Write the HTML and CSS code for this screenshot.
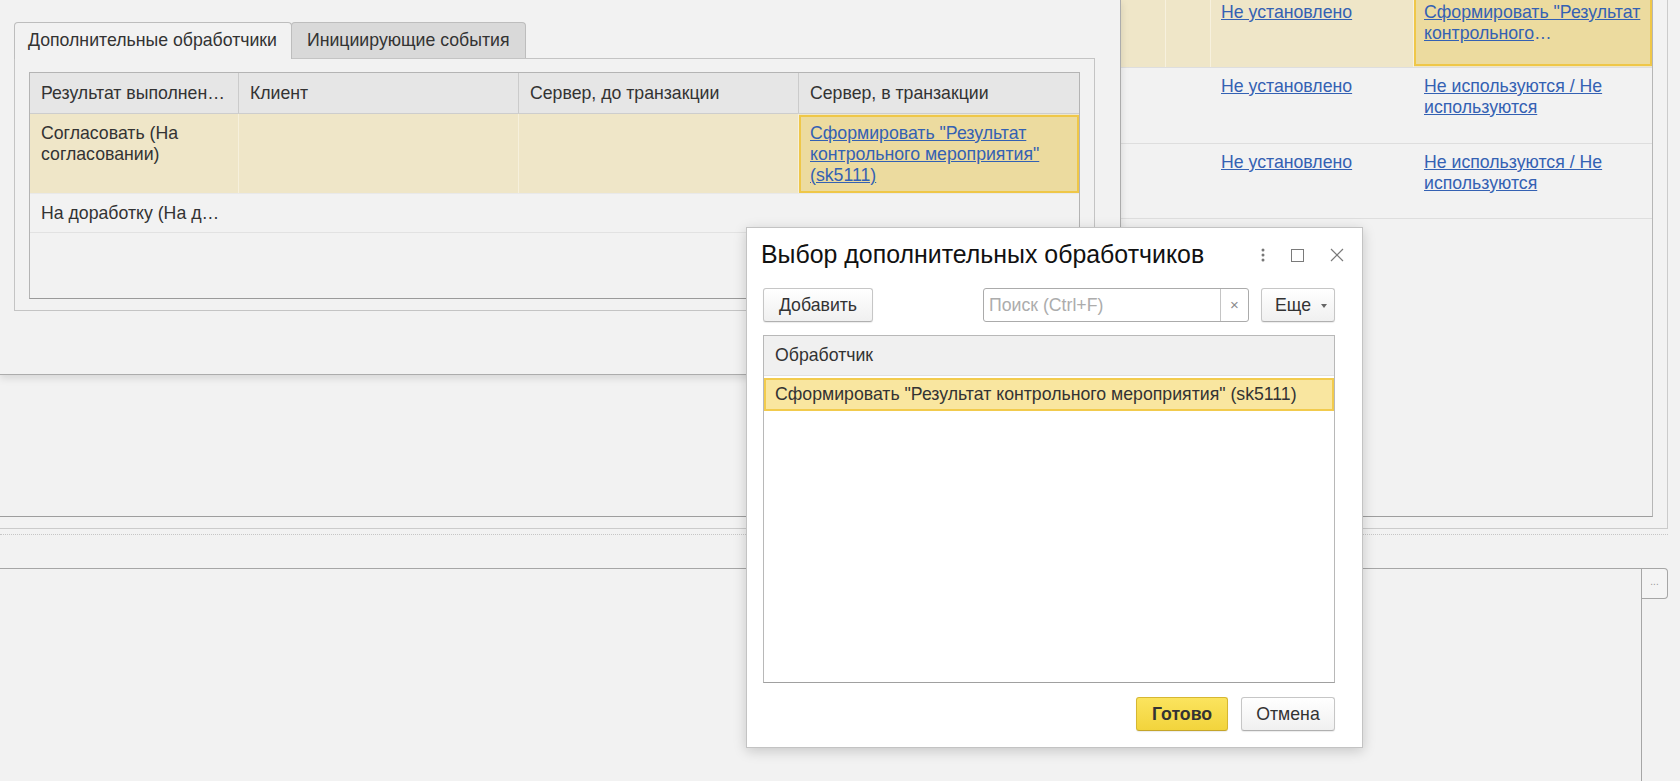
FILE: index.html
```html
<!DOCTYPE html>
<html lang="ru">
<head>
  <meta charset="UTF-8" />
  <title>Обработчики бизнес-процесса</title>
  <link rel="stylesheet" href="styles.css">
</head>
<body>
  <div class="desk">
    <!-- main form behind the windows -->
    <div class="form">
      <div class="group">
        <div class="list">
          <div class="list-rows">
            <div class="list-row current">
              <div class="cell"></div>
              <div class="cell"></div>
              <div class="cell"><a href="#">Не установлено</a></div>
              <div class="cell focus"><a href="#" class="clamp">Сформировать "Результат контрольного мероприятия" (sk5111)</a></div>
            </div>
            <div class="list-row">
              <div class="cell"></div>
              <div class="cell"></div>
              <div class="cell"><a href="#">Не установлено</a></div>
              <div class="cell"><a href="#">Не используются / Не используются</a></div>
            </div>
            <div class="list-row">
              <div class="cell"></div>
              <div class="cell"></div>
              <div class="cell"><a href="#">Не установлено</a></div>
              <div class="cell"><a href="#">Не используются / Не используются</a></div>
            </div>
          </div>
        </div>
      </div>
      <div class="splitter"></div>
      <div class="memo">
        <div class="memo-field"></div>
        <button class="memo-btn">...</button>
      </div>
    </div>

    <!-- handlers window -->
    <div class="window">
      <div class="tabs">
        <div class="tab active">Дополнительные обработчики</div>
        <div class="tab">Инициирующие события</div>
      </div>
      <div class="tab-page">
        <div class="grid">
          <div class="grid-row grid-head">
            <div class="gcell"><span class="cut">Результат выполнения</span></div>
            <div class="gcell">Клиент</div>
            <div class="gcell">Сервер, до транзакции</div>
            <div class="gcell">Сервер, в транзакции</div>
          </div>
          <div class="grid-row current">
            <div class="gcell">Согласовать (На согласовании)</div>
            <div class="gcell"></div>
            <div class="gcell"></div>
            <div class="gcell focus"><a href="#">Сформировать "Результат контрольного мероприятия" (sk5111)</a></div>
          </div>
          <div class="grid-row plain">
            <div class="gcell"><span class="cut">На доработку (На доработке)</span></div>
            <div class="gcell"></div>
            <div class="gcell"></div>
            <div class="gcell"></div>
          </div>
        </div>
      </div>
    </div>

    <!-- choice dialog -->
    <div class="dialog">
      <div class="dlg-head">
        <div class="dlg-title">Выбор дополнительных обработчиков</div>
        <div class="dlg-icons">
          <svg width="4" height="14" viewBox="0 0 4 14"><circle cx="2" cy="2" r="1.5" fill="#777"/><circle cx="2" cy="7" r="1.5" fill="#777"/><circle cx="2" cy="12" r="1.5" fill="#777"/></svg>
          <svg width="13" height="13" viewBox="0 0 13 13"><rect x="0.5" y="0.5" width="12" height="12" fill="none" stroke="#7a7a7a"/></svg>
          <svg width="14" height="14" viewBox="0 0 14 14"><path d="M1 1 L13 13 M13 1 L1 13" stroke="#7a7a7a" stroke-width="1.2"/></svg>
        </div>
      </div>
      <div class="dlg-body">
        <div class="toolbar">
          <button class="btn">Добавить</button>
          <div class="search">
            <input type="text" placeholder="Поиск (Ctrl+F)">
            <span class="search-clear">×</span>
          </div>
          <button class="btn btn-more">Еще <span class="caret"></span></button>
        </div>
        <div class="pick-table">
          <div class="pick-head">Обработчик</div>
          <div class="pick-row">Сформировать "Результат контрольного мероприятия" (sk5111)</div>
        </div>
        <div class="dlg-foot">
          <button class="btn btn-default">Готово</button>
          <button class="btn btn-cancel">Отмена</button>
        </div>
      </div>
    </div>
  </div>
</body>
</html>
```

FILE: styles.css
```css
body {
  margin: 0;
  background: #f2f2f2;
  font-family: "Liberation Sans", Arial, sans-serif;
  font-size: 17.7px;
  color: #333;
  overflow: hidden;
}
a {
  color: #3461b3;
}
.desk {
  position: relative;
  width: 1680px;
  height: 781px;
  overflow: hidden;
}

/* main form */
.form {
  width: 1668px;
}
.group {
  box-sizing: border-box;
  height: 529px;
  padding-right: 14px;
  border-right: 1px solid #cbcbcb;
  border-bottom: 1px solid #cbcbcb;
}
.list {
  box-sizing: border-box;
  height: 517px;
  overflow: hidden;
  border-right: 1px solid #b6b6b6;
  border-bottom: 1px solid #9e9e9e;
}
.list-rows {
  margin-top: -6px;
}
.list-row {
  display: grid;
  grid-template-columns: 1fr 45px 203px 238px;
  height: 76px;
  box-sizing: border-box;
  border-bottom: 1px solid #dedede;
  line-height: 21px;
}
.list-row:first-child {
  height: 74px;
}
.list-row:last-child {
  height: 75px;
}
.list-row.current {
  background: #efe6c8;
}
.list-row.current .cell {
  border-right: 1px solid #f7f1de;
}
.cell {
  padding: 8px 10px 0;
  min-width: 0;
}
.cell.focus {
  background: #ecdb9f;
  border: 2px solid #efc748;
  padding: 6px 8px 0;
  margin-bottom: 1px;
}
.list-row.current .cell.focus {
  border-right: 2px solid #efc748;
}
.clamp {
  display: -webkit-box;
  -webkit-box-orient: vertical;
  -webkit-line-clamp: 2;
  overflow: hidden;
}
.splitter {
  margin-top: 5px;
  border-top: 1px dotted #c6c6c6;
}
.memo {
  display: flex;
  margin-top: 33px;
}
.memo-field {
  flex: 1;
  height: 240px;
  border-top: 1px solid #a6a6a6;
  border-right: 1px solid #a6a6a6;
}
.memo-btn {
  box-sizing: border-box;
  width: 26px;
  height: 31px;
  padding: 0 0 4px;
  border: 1px solid #a6a6a6;
  border-left: none;
  border-radius: 0 4px 4px 0;
  background: #f4f4f4;
  color: #999;
  font-size: 10px;
  font-family: inherit;
}

/* handlers window */
.window {
  position: absolute;
  left: 0;
  top: 0;
  box-sizing: border-box;
  width: 1121px;
  height: 375px;
  padding: 22px 0 0 14px;
  background: #f2f2f2;
  border-right: 1px solid #acacac;
  border-bottom: 1px solid #acacac;
  box-shadow: 0 3px 8px rgba(0, 0, 0, 0.12);
}
.tabs {
  display: flex;
  position: relative;
  z-index: 1;
}
.tab {
  box-sizing: border-box;
  height: 36px;
  padding: 0 15px;
  line-height: 35px;
  white-space: nowrap;
  border: 1px solid #bdbdbd;
  border-bottom: none;
  border-radius: 4px 4px 0 0;
  background: #d9d9d9;
}
.tab.active {
  width: 278px;
  height: 37px;
  padding-left: 13px;
  background: #f2f2f2;
}
.tab + .tab {
  width: 235px;
  margin-left: -1px;
}
.tab-page {
  box-sizing: border-box;
  width: 1081px;
  height: 253px;
  margin-top: -1px;
  padding: 13px 14px;
  border: 1px solid #c4c4c4;
}
.grid {
  box-sizing: border-box;
  height: 227px;
  border: 1px solid #b4b4b4;
  border-bottom-color: #9a9a9a;
  line-height: 21px;
}
.grid-row {
  display: grid;
  grid-template-columns: 209px 280px 280px 1fr;
  box-sizing: border-box;
}
.gcell {
  padding: 9px 11px 0 11px;
  min-width: 0;
}
.grid-row .gcell:first-child {
  padding-right: 12px;
}
.grid-head {
  height: 41px;
  background: #e6e6e6;
  border-bottom: 1px solid #cdcdcd;
}
.grid-head .gcell {
  padding-top: 10px;
  border-right: 1px solid #cbcbcb;
}
.grid-head .gcell:last-child {
  border-right: none;
}
.grid-row.current {
  height: 80px;
  background: #efe6c8;
  border-bottom: 1px solid #e9e9e9;
}
.grid-row.current .gcell {
  border-right: 1px solid #f6f0dc;
}
.grid-row .gcell.focus {
  margin: 1px 0 0 0;
  padding: 6px 9px 0;
  background: #ecdb9f;
  border: 2px solid #efc748;
}
.grid-row.plain {
  height: 39px;
  border-bottom: 1px solid #e2e2e2;
}
.cut {
  display: block;
  white-space: nowrap;
  overflow: hidden;
  text-overflow: ellipsis;
}

/* choice dialog */
.dialog {
  position: absolute;
  left: 746px;
  top: 227px;
  box-sizing: border-box;
  width: 617px;
  height: 521px;
  background: #fff;
  border: 1px solid #c3c3c3;
  box-shadow: 0 3px 12px rgba(0, 0, 0, 0.18);
}
.dlg-head {
  display: flex;
  align-items: center;
  height: 60px;
  padding: 0 18px 0 14px;
  box-sizing: border-box;
}
.dlg-title {
  flex: 1;
  font-size: 24.9px;
  color: #111;
  margin-top: -7px;
}
.dlg-icons {
  display: flex;
  align-items: center;
  gap: 26px;
  margin-top: -6px;
}
.dlg-body {
  padding: 0 27px 0 16px;
}
.toolbar {
  display: flex;
  height: 34px;
}
.btn {
  box-sizing: border-box;
  height: 34px;
  padding: 0 14px;
  font-family: inherit;
  font-size: 17.7px;
  color: #333;
  background: linear-gradient(#ffffff, #f0f0f0);
  border: 1px solid #c6c6c6;
  border-bottom-color: #b0b0b0;
  border-radius: 3px;
  box-shadow: 0 1px 1px rgba(0, 0, 0, 0.08);
}
.toolbar .btn:first-child {
  width: 110px;
}
.search {
  display: flex;
  margin-left: auto;
  width: 266px;
  box-sizing: border-box;
  border: 1px solid #ababab;
  border-radius: 3px;
}
.search input {
  flex: 1;
  min-width: 0;
  border: none;
  padding: 0 5px;
  font-family: inherit;
  font-size: 17.7px;
  background: transparent;
  outline: none;
}
.search input::placeholder {
  color: #acacac;
}
.search-clear {
  width: 27px;
  border-left: 1px solid #c4c4c4;
  text-align: center;
  line-height: 31px;
  font-size: 15px;
  color: #8c8c8c;
}
.btn-more {
  width: 74px;
  margin-left: 12px;
  padding: 0 0 0 13px;
  text-align: left;
}
.caret {
  display: inline-block;
  margin-left: 5px;
  vertical-align: middle;
  border-top: 4px solid #666;
  border-left: 3px solid transparent;
  border-right: 3px solid transparent;
}
.pick-table {
  box-sizing: border-box;
  height: 348px;
  margin-top: 13px;
  border: 1px solid #b8b8b8;
  border-bottom-color: #a0a0a0;
}
.pick-head {
  height: 40px;
  box-sizing: border-box;
  padding-left: 11px;
  line-height: 39px;
  background: #f0f0f0;
  border-bottom: 1px solid #e2e2e2;
}
.pick-row {
  height: 33px;
  margin-top: 2px;
  box-sizing: border-box;
  padding-left: 9px;
  line-height: 29px;
  background: #f9e6a0;
  border: 2px solid #f2cb4d;
}
.dlg-foot {
  display: flex;
  justify-content: flex-end;
  gap: 13px;
  margin-top: 14px;
}
.btn-default {
  width: 92px;
  font-weight: bold;
  background: linear-gradient(#fbe45e, #f2d43c);
  border-color: #d6b732;
  border-bottom-color: #c4a52a;
}
.btn-cancel {
  width: 94px;
}
```
